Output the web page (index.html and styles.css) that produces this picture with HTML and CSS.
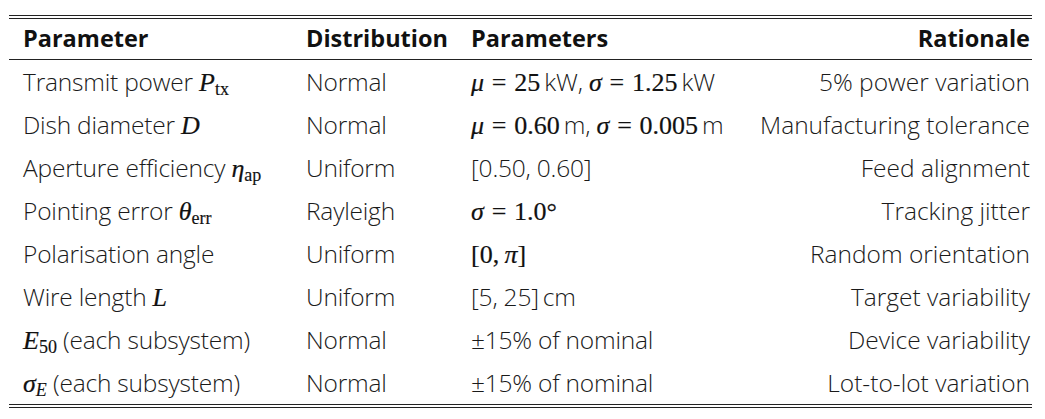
FILE: index.html
```html
<!DOCTYPE html>
<html lang="en">
<head>
<meta charset="utf-8">
<title>Parameter distributions</title>
<link rel="stylesheet" href="styles.css">
</head>
<body>
<div class="wrap">
<table class="tbl">
  <thead>
    <tr>
      <th class="c1">Parameter</th>
      <th class="c2">Distribution</th>
      <th class="c3">Parameters</th>
      <th class="c4">Rationale</th>
    </tr>
  </thead>
  <tbody>
    <tr>
      <td class="c1">Transmit power <span class="m"><i>P</i><sub>tx</sub></span></td>
      <td class="c2">Normal</td>
      <td class="c3"><span class="m"><i>μ</i><span class="eq">=</span>25</span><span class="u">kW,</span> <span class="m"><i>σ</i><span class="eq">=</span>1.25</span><span class="u">kW</span></td>
      <td class="c4">5% power variation</td>
    </tr>
    <tr>
      <td class="c1">Dish diameter <span class="m"><i>D</i></span></td>
      <td class="c2">Normal</td>
      <td class="c3"><span class="m"><i>μ</i><span class="eq">=</span>0.60</span><span class="u">m,</span> <span class="m"><i>σ</i><span class="eq">=</span>0.005</span><span class="u">m</span></td>
      <td class="c4">Manufacturing tolerance</td>
    </tr>
    <tr>
      <td class="c1">Aperture efficiency <span class="m"><i>η</i><sub>ap</sub></span></td>
      <td class="c2">Uniform</td>
      <td class="c3">[0.50, 0.60]</td>
      <td class="c4">Feed alignment</td>
    </tr>
    <tr>
      <td class="c1">Pointing error <span class="m"><i>θ</i><sub>err</sub></span></td>
      <td class="c2">Rayleigh</td>
      <td class="c3"><span class="m"><i>σ</i><span class="eq">=</span>1.0°</span></td>
      <td class="c4">Tracking jitter</td>
    </tr>
    <tr>
      <td class="c1">Polarisation angle</td>
      <td class="c2">Uniform</td>
      <td class="c3"><span class="m">[0,&#8201;<i>π</i>]</span></td>
      <td class="c4">Random orientation</td>
    </tr>
    <tr>
      <td class="c1">Wire length <span class="m"><i>L</i></span></td>
      <td class="c2">Uniform</td>
      <td class="c3">[5, 25]<span class="u">cm</span></td>
      <td class="c4">Target variability</td>
    </tr>
    <tr>
      <td class="c1"><span class="m"><i>E</i><sub>50</sub></span> (each subsystem)</td>
      <td class="c2">Normal</td>
      <td class="c3">±15% of nominal</td>
      <td class="c4">Device variability</td>
    </tr>
    <tr>
      <td class="c1"><span class="m"><i>σ</i><sub><i>E</i></sub></span> (each subsystem)</td>
      <td class="c2">Normal</td>
      <td class="c3">±15% of nominal</td>
      <td class="c4">Lot-to-lot variation</td>
    </tr>
  </tbody>
</table>
</div>
</body>
</html>
```

FILE: styles.css
```css
html, body {
  margin: 0;
  padding: 0;
  background: #ffffff;
}

.wrap {
  padding: 15px 0 0 9px;
  width: 1023px;
}

.tbl {
  width: 1023px;
  border-collapse: collapse;
  font-family: "Open Sans", "Noto Sans", sans-serif;
  font-size: 24.5px;
  color: #1a1a1a;
  border-top: 4px double #222;
  border-bottom: 4px double #222;
}

.tbl th {
  font-weight: 700;
  font-size: 23.5px;
  color: #111;
  line-height: 31px;
  padding: 4px 0 5px;
  text-align: left;
  border-bottom: 1px solid #222;
  white-space: nowrap;
}

.tbl td {
  font-weight: 300;
  line-height: 31.5px;
  height: 31.5px;
  padding: 5.5px 0 6px;
  white-space: nowrap;
  text-align: left;
  letter-spacing: -0.2px;
  vertical-align: top;
}

.c1 { width: 283px; padding-left: 14px !important; }
.c2 { width: 165px; }
.c3 { width: 285px; }
.tbl .c4 { text-align: right; padding-right: 2px; letter-spacing: 0; }

.m {
  font-family: "Liberation Serif", "Times New Roman", serif;
  font-size: 26px;
  font-weight: 400;
  line-height: 0;
  color: #111;
  letter-spacing: 0;
  -webkit-text-stroke: 0.2px #111;
}

.eq {
  display: inline-block;
  margin: 0 0.3em;
  line-height: 0;
}

.u {
  margin-left: 4px;
}

.m sub {
  font-size: 18px;
  vertical-align: -4px;
  line-height: 0;
  -webkit-text-stroke: 0.15px #111;
}
```
